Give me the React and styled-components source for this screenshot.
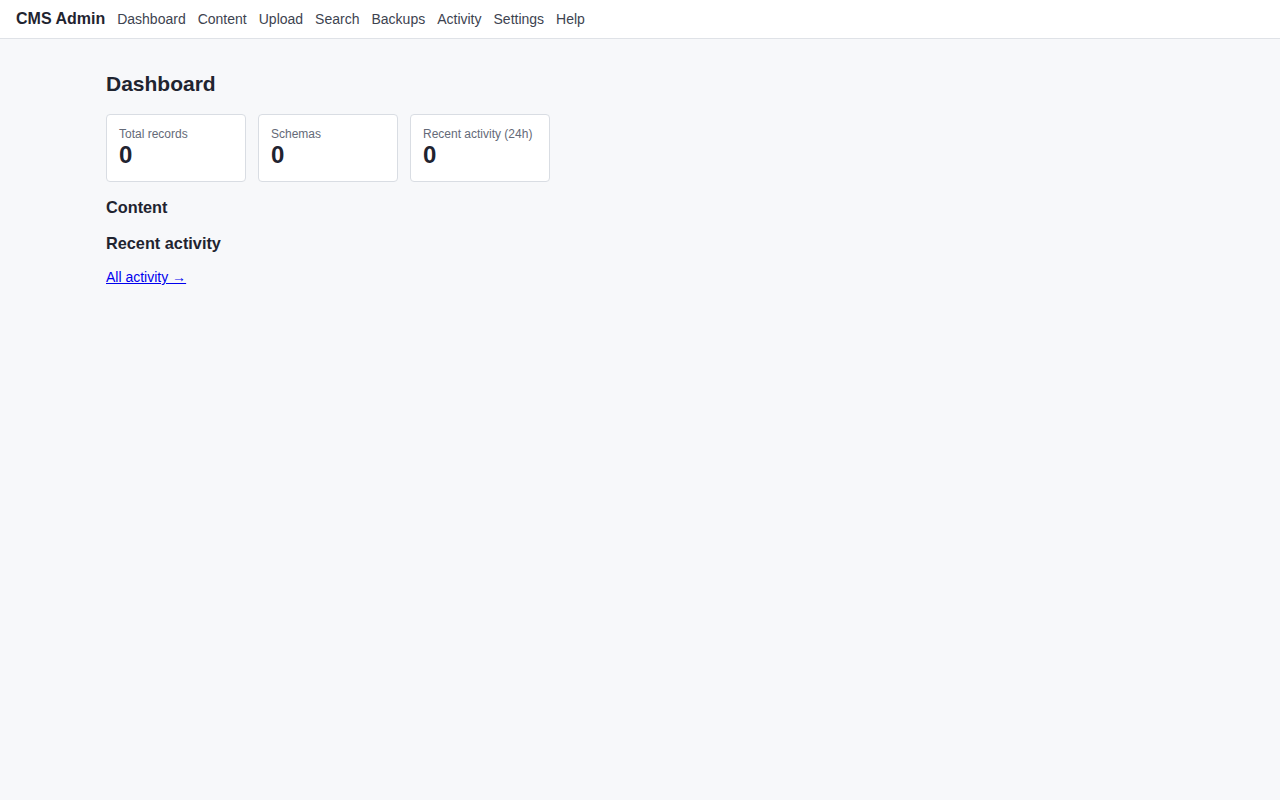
import React from "react";
import styled, { createGlobalStyle } from "styled-components";

const GlobalStyle = createGlobalStyle`
  html, body {
    margin: 0;
    padding: 0;
    background: #f7f8fa;
    color: #1f2430;
    font-family: "Liberation Sans", Arial, sans-serif;
  }
`;

const Header = styled.header`
  height: 38px;
  display: flex;
  align-items: center;
  gap: 12px;
  padding: 0 16px;
  background: #fff;
  border-bottom: 1px solid #dfe2e7;
`;

const Brand = styled.span`
  font-size: 16px;
  font-weight: 700;
  color: #1f2430;
`;

const NavLink = styled.a`
  font-size: 14px;
  color: #3d4350;
  text-decoration: none;
`;

const Main = styled.main`
  max-width: 1068px;
  margin: 0 auto;
  padding-top: 33px;
`;

const Title = styled.h1`
  margin: 0 0 18px;
  font-size: 21px;
  line-height: 24px;
  font-weight: 700;
`;

const Stats = styled.div`
  display: flex;
  gap: 12px;
`;

const Card = styled.div`
  width: 140px;
  box-sizing: border-box;
  padding: 12px;
  background: #fff;
  border: 1px solid #d9dde3;
  border-radius: 4px;
`;

const Label = styled.div`
  font-size: 12px;
  line-height: 14px;
  color: #646a78;
`;

const Value = styled.div`
  font-size: 24px;
  line-height: 28px;
  font-weight: 700;
`;

const Section = styled.h2`
  margin: 16px 0 0;
  font-size: 16.3px;
  line-height: 20px;
  font-weight: 700;

  &:first-of-type {
    margin-top: 15px;
  }
`;

const More = styled.p`
  margin: 16px 0 0;
  font-size: 14px;
  line-height: 16px;

  a {
    color: #0000ee;
  }
`;

const nav = ["Dashboard", "Content", "Upload", "Search", "Backups", "Activity", "Settings", "Help"];

const stats = [
  { label: "Total records", value: 0 },
  { label: "Schemas", value: 0 },
  { label: "Recent activity (24h)", value: 0 },
];

export default function App() {
  return (
    <>
      <GlobalStyle />
      <Header>
        <Brand>CMS Admin</Brand>
        {nav.map((item) => (
          <NavLink key={item} href="#">{item}</NavLink>
        ))}
      </Header>
      <Main>
        <Title>Dashboard</Title>
        <Stats>
          {stats.map((s) => (
            <Card key={s.label}>
              <Label>{s.label}</Label>
              <Value>{s.value}</Value>
            </Card>
          ))}
        </Stats>
        <Section>Content</Section>
        <Section>Recent activity</Section>
        <More>
          <a href="#">All activity →</a>
        </More>
      </Main>
    </>
  );
}
